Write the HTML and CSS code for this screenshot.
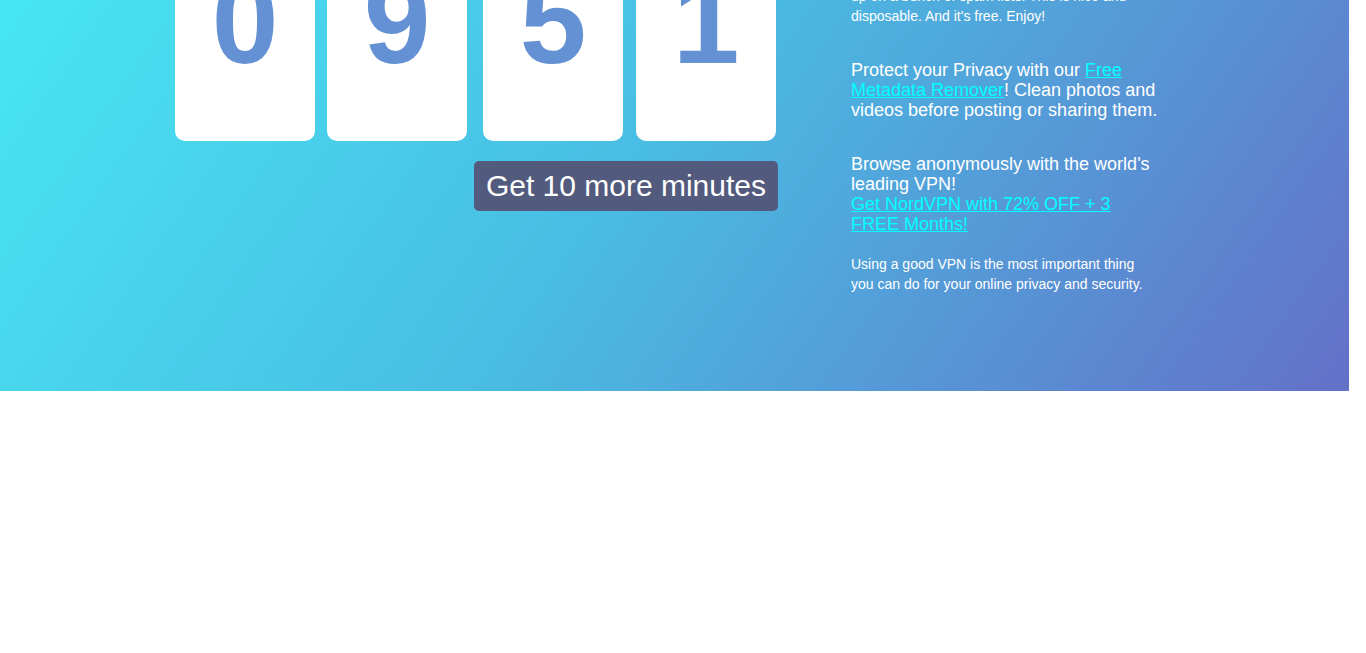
FILE: index.html
```html
<!DOCTYPE html>
<html lang="en">
<head>
<meta charset="utf-8">
<title>Temp Mail</title>
<link rel="stylesheet" href="styles.css">
</head>
<body>
<section class="hero">
  <div class="hero-inner">
    <div class="timer">
      <div class="digits">
        <div class="pair">
          <div class="card">0</div>
          <div class="card">9</div>
        </div>
        <div class="pair pair-right">
          <div class="card">5</div>
          <div class="card">1</div>
        </div>
      </div>
      <button class="more-btn" type="button">Get 10 more minutes</button>
    </div>
    <aside class="side">
      <p class="small">Sign up for sites without ending<br>up on a bunch of spam lists. This is nice and disposable. And it's free. Enjoy!</p>
      <p class="large">Protect your Privacy with our <a href="#">Free Metadata Remover</a>! Clean photos and videos before posting or sharing them.</p>
      <p class="large">Browse anonymously with the world's<br>leading VPN!<br><a href="#">Get NordVPN with 72% OFF + 3 FREE Months!</a></p>
      <p class="small note">Using a good VPN is the most important thing you can do for your online privacy and security.</p>
    </aside>
  </div>
</section>
</body>
</html>
```
FILE: styles.css
```css
html, body {
  margin: 0;
  padding: 0;
  background: #ffffff;
}

body {
  font-family: "Liberation Sans", Arial, sans-serif;
  color: #ffffff;
}

.hero {
  margin-top: -160px;
  margin-right: 17px;
  height: 551px;
  box-sizing: border-box;
  padding-top: 61px;
  background: linear-gradient(125deg, #47ecf5 0%, #49bce3 50%, #6470c8 100%);
  overflow: hidden;
}

.hero-inner {
  width: 999px;
  margin: 0 auto;
  display: grid;
  grid-template-columns: 603px 307px;
  column-gap: 73px;
  align-items: start;
}

.timer {
  display: flex;
  flex-direction: column;
  align-items: flex-end;
}

.digits {
  align-self: flex-start;
  display: flex;
  gap: 16px;
}

.pair {
  display: flex;
  gap: 12px;
}

.pair-right {
  gap: 13px;
}

.card {
  width: 140px;
  height: 240px;
  box-sizing: border-box;
  padding-top: 60px;
  background: #ffffff;
  border-radius: 10px;
  color: #6391d3;
  font-size: 120px;
  font-weight: bold;
  line-height: 1;
  text-align: center;
}

.more-btn {
  margin-top: 20px;
  padding: 8px 12px;
  border: 0;
  border-radius: 5px;
  background: #525a7d;
  color: #ffffff;
  font-family: "Liberation Sans", Arial, sans-serif;
  font-size: 30px;
  line-height: 34px;
  cursor: pointer;
}

.side {
  padding-top: 65px;
}

.side p {
  margin: 0;
}

.small {
  font-size: 14px;
  line-height: 20px;
}

.large {
  font-size: 18px;
  line-height: 20px;
  margin-top: 34px !important;
}

.note {
  margin-top: 20px !important;
}

.side a {
  color: #00ffff;
  text-decoration: underline;
}
```
